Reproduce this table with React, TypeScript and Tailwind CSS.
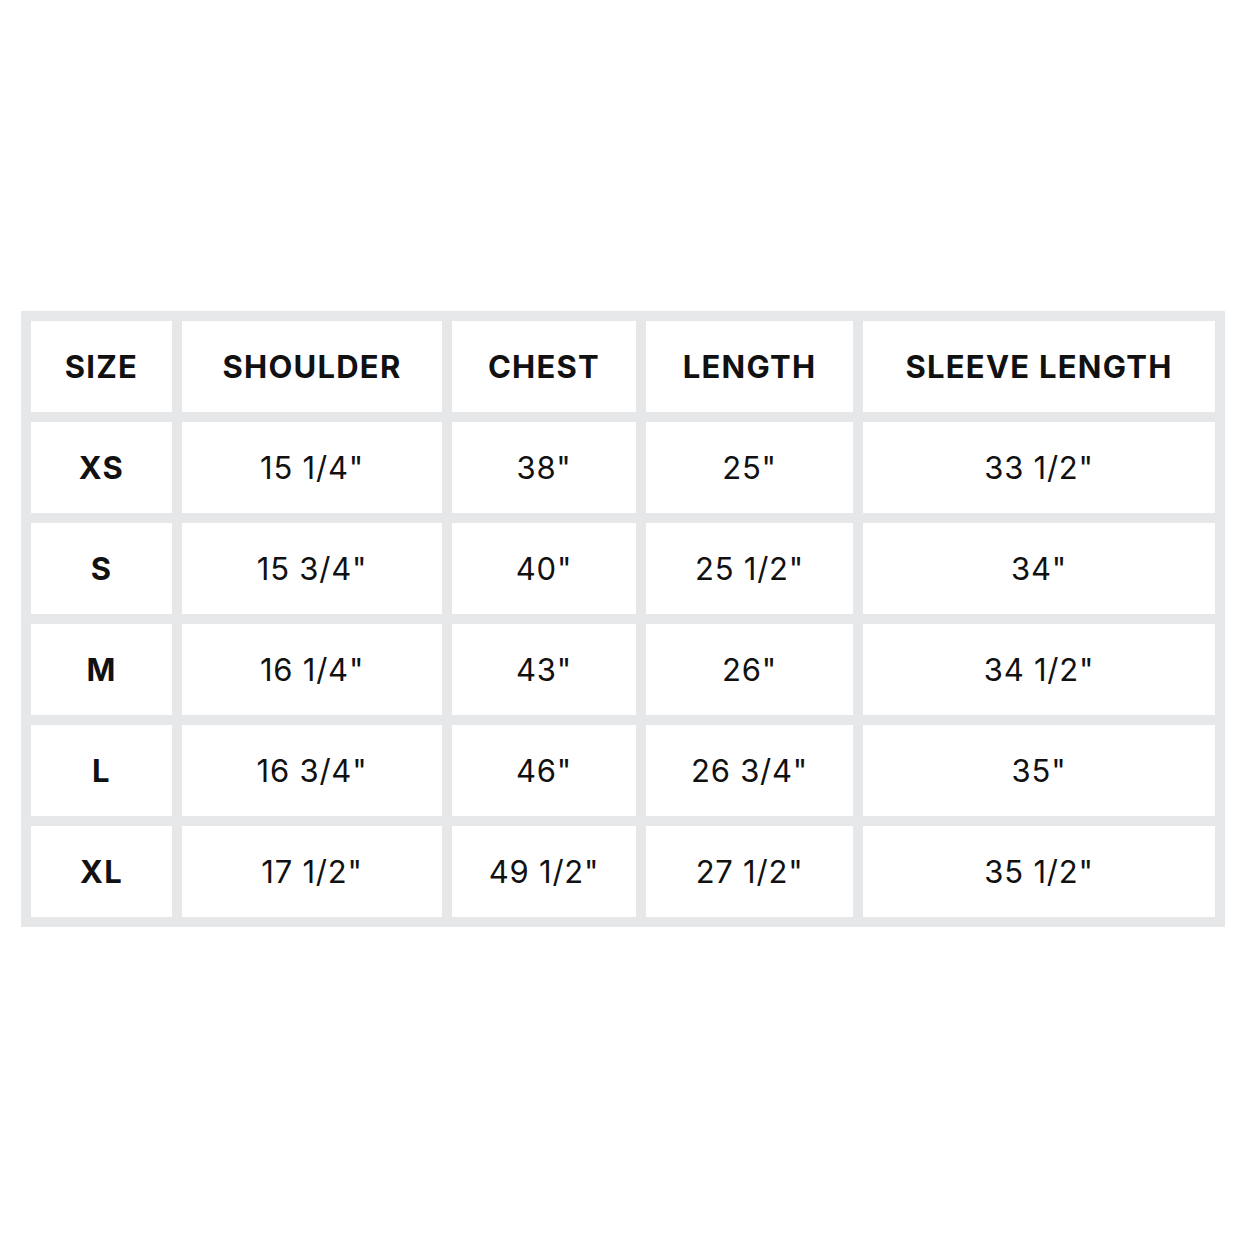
import React from 'react';

const headers = ['SIZE', 'SHOULDER', 'CHEST', 'LENGTH', 'SLEEVE LENGTH'];

const rows = [
    ['XS', '15 1/4"', '38"', '25"', '33 1/2"'],
    ['S', '15 3/4"', '40"', '25 1/2"', '34"'],
    ['M', '16 1/4"', '43"', '26"', '34 1/2"'],
    ['L', '16 3/4"', '46"', '26 3/4"', '35"'],
    ['XL', '17 1/2"', '49 1/2"', '27 1/2"', '35 1/2"'],
];

const App: React.FC = () => {
    return (
        <div className="w-[1246px] h-[1246px] bg-white pt-[311px] font-['Inter','Liberation_Sans',sans-serif] text-[#111]">
            <div className="mx-auto w-[1204px] bg-[#e6e7e8] p-[10px] grid grid-cols-[141px_260px_184px_207px_352px] auto-rows-[91px] gap-[10px]">
                {headers.map((h) => (
                    <div key={h} className="bg-white flex items-center justify-center pt-[2px] text-[31px] font-bold tracking-[0.04em]">
                        {h}
                    </div>
                ))}
                {rows.map((row) =>
                    row.map((cell, i) => (
                        <div
                            key={row[0] + i}
                            className={`bg-white flex items-center justify-center pt-[2px] text-[31px] ${
                                i === 0 ? 'font-bold tracking-[0.04em]' : 'font-normal tracking-[0.025em]'
                            }`}
                        >
                            {cell}
                        </div>
                    ))
                )}
            </div>
        </div>
    );
};

export default App;
